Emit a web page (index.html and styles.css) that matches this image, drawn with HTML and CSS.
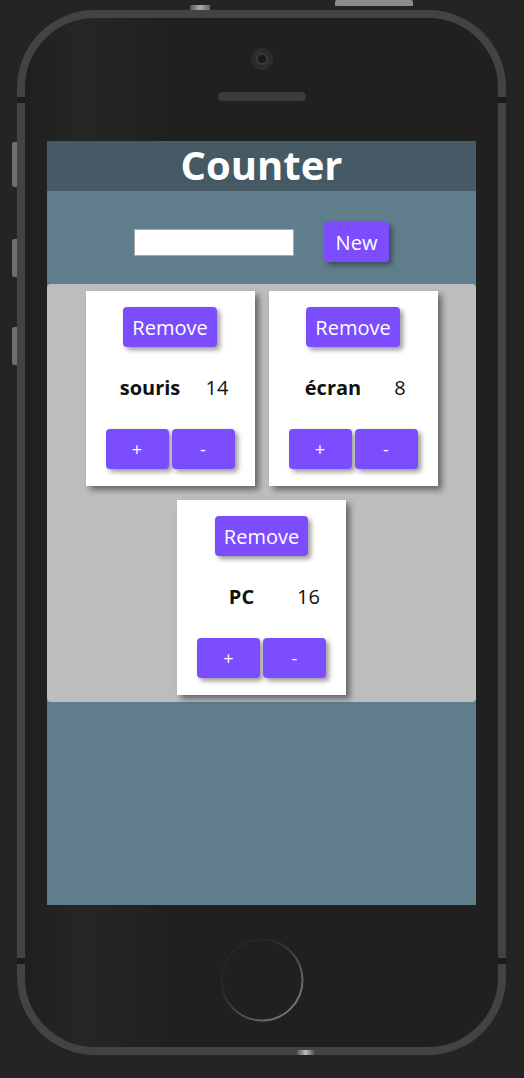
FILE: index.html
```html
<!DOCTYPE html>
<html lang="fr">
<head>
    <meta charset="UTF-8">
    <meta name="viewport" content="width=device-width, initial-scale=1.0">
    <title>Counter</title>
    <link rel="stylesheet" href="styles.css">
</head>
<body>

    <div class="phone">
        <!-- frame details -->
        <span class="top-btn"></span>
        <span class="top-cap"></span>
        <span class="side-btn mute"></span>
        <span class="side-btn vol-up"></span>
        <span class="side-btn vol-down"></span>
        <span class="notch notch-tl"></span>
        <span class="notch notch-tr"></span>
        <span class="notch notch-bl"></span>
        <span class="notch notch-br"></span>
        <span class="bottom-cap"></span>

        <div class="camera"><span class="lens"></span></div>
        <div class="speaker"></div>

        <div class="screen">
            <header class="app-header">
                <h1>Counter</h1>
            </header>

            <form class="new-form" id="newForm">
                <input type="text" id="newName">
                <button type="submit" class="btn btn-new">New</button>
            </form>

            <div class="counters" id="counters">
                <!-- counters will be inserted here -->
            </div>
        </div>

        <div class="home">
            <svg width="84" height="84" viewBox="0 0 84 84">
                <defs>
                    <linearGradient id="ring" x1="0" y1="0" x2="1" y2="1">
                        <stop offset="0" stop-color="#222"/>
                        <stop offset="0.35" stop-color="#2a2a2a"/>
                        <stop offset="1" stop-color="#8a8a8a"/>
                    </linearGradient>
                </defs>
                <circle cx="42" cy="42" r="40.5" fill="none" stroke="url(#ring)" stroke-width="2"/>
            </svg>
        </div>
    </div>

    <script>
        const counters = [
            { name: 'souris', count: 14 },
            { name: 'écran', count: 8 },
            { name: 'PC', count: 16 }
        ];

        function render() {
            const list = document.getElementById('counters');
            list.innerHTML = '';
            counters.forEach((item, i) => {
                const card = document.createElement('div');
                card.className = 'card';
                card.innerHTML = `
                    <button class="btn btn-remove" data-i="${i}">Remove</button>
                    <div class="count-row">
                        <span class="name">${item.name}</span>
                        <span class="value">${item.count}</span>
                    </div>
                    <div class="actions">
                        <button class="btn btn-step" data-plus="${i}">+</button>
                        <button class="btn btn-step" data-minus="${i}">-</button>
                    </div>
                `;
                list.appendChild(card);
            });
        }

        document.getElementById('counters').addEventListener('click', e => {
            const t = e.target;
            if (t.dataset.i !== undefined) counters.splice(t.dataset.i, 1);
            if (t.dataset.plus !== undefined) counters[t.dataset.plus].count++;
            if (t.dataset.minus !== undefined) counters[t.dataset.minus].count--;
            render();
        });

        document.getElementById('newForm').addEventListener('submit', e => {
            e.preventDefault();
            const input = document.getElementById('newName');
            if (input.value.trim()) {
                counters.push({ name: input.value.trim(), count: 0 });
                input.value = '';
                render();
            }
        });

        render();
    </script>

</body>
</html>
```

FILE: styles.css
```css
body {
    margin: 0;
    background-color: #242424;
    font-family: 'Open Sans', 'Noto Sans', sans-serif;
}

/* phone frame */
.phone {
    position: relative;
    box-sizing: border-box;
    width: 489px;
    height: 1045px;
    margin: 10px 0 0 17px;
    padding-top: 30px;
    border: 8px solid #414446;
    border-radius: 78px;
    background: linear-gradient(90deg, #1f1f1f 0%, #262626 12%, #202020 30%, #202020 100%);
    display: flex;
    flex-direction: column;
    align-items: center;
}
.top-btn {
    position: absolute;
    top: -18px;
    left: 310px;
    width: 78px;
    height: 6px;
    border-radius: 2px 2px 0 0;
    background-color: #8c8c8c;
}
.top-cap {
    position: absolute;
    top: -13px;
    left: 165px;
    width: 20px;
    height: 5px;
    background: linear-gradient(90deg, #555, #aaa, #666);
}
.side-btn {
    position: absolute;
    left: -13px;
    width: 5px;
    border-radius: 2px 0 0 2px;
    background-color: #6e6e6e;
}
.mute { top: 124px; height: 45px; }
.vol-up { top: 221px; height: 38px; }
.vol-down { top: 309px; height: 38px; }
.notch {
    position: absolute;
    width: 8px;
    height: 6px;
    background-color: #1b1b1b;
}
.notch-tl { left: -8px; top: 79px; }
.notch-tr { right: -8px; top: 79px; }
.notch-bl { left: -8px; top: 940px; }
.notch-br { right: -8px; top: 940px; }
.bottom-cap {
    position: absolute;
    bottom: -8px;
    left: 272px;
    width: 17px;
    height: 5px;
    background: linear-gradient(90deg, #555, #bbb, #555);
}
.camera {
    width: 22px;
    height: 22px;
    border-radius: 50%;
    background-color: #2c2c2c;
    display: flex;
    align-items: center;
    justify-content: center;
}
.lens {
    width: 8px;
    height: 8px;
    border-radius: 50%;
    background-color: #1a1a1a;
    box-shadow: 0 0 0 2px #3a3a3a;
}
.speaker {
    margin-top: 22px;
    width: 88px;
    height: 9px;
    border-radius: 5px;
    background-color: #3b3b3b;
}
.home {
    margin-top: 33px;
    height: 84px;
}

/* app screen */
.screen {
    margin-top: 40px;
    width: 429px;
    height: 764px;
    background-color: #607d8b;
    display: flex;
    flex-direction: column;
}
.app-header {
    background-color: #455a64;
    height: 50px;
}
.app-header h1 {
    margin: 0;
    color: white;
    font-size: 40px;
    line-height: 48px;
    text-align: center;
}
.new-form {
    display: flex;
    justify-content: center;
    align-items: center;
    gap: 30px;
    padding: 31px 0 22px;
}
.new-form input {
    box-sizing: border-box;
    width: 160px;
    height: 27px;
    border: 1px solid #a9a9a9;
    background-color: white;
}
.btn {
    height: 40px;
    border: none;
    border-radius: 4px;
    background-color: #7c4dff;
    color: white;
    font-family: inherit;
    cursor: pointer;
    box-shadow: 3px 3px 5px rgba(0, 0, 0, 0.4);
}
.btn-new {
    font-size: 20px;
    padding: 0 12px;
}
.counters {
    background-color: #bdbdbd;
    border-radius: 4px;
    display: flex;
    flex-wrap: wrap;
    justify-content: center;
}
.card {
    box-sizing: border-box;
    width: 169px;
    margin: 7px;
    padding: 16px 20px 17px;
    background-color: white;
    display: flex;
    flex-direction: column;
    align-items: center;
    box-shadow: 4px 4px 6px rgba(0, 0, 0, 0.45);
}
.btn-remove {
    font-size: 20px;
    padding: 0 9px;
}
.count-row {
    display: grid;
    grid-template-columns: 94px 40px;
    margin: 28px 0;
    font-size: 20px;
    line-height: 26px;
    text-align: center;
    color: #111;
}
.name {
    font-weight: bold;
}
.actions {
    display: flex;
    gap: 3px;
}
.btn-step {
    width: 63px;
    font-size: 18px;
}
```
